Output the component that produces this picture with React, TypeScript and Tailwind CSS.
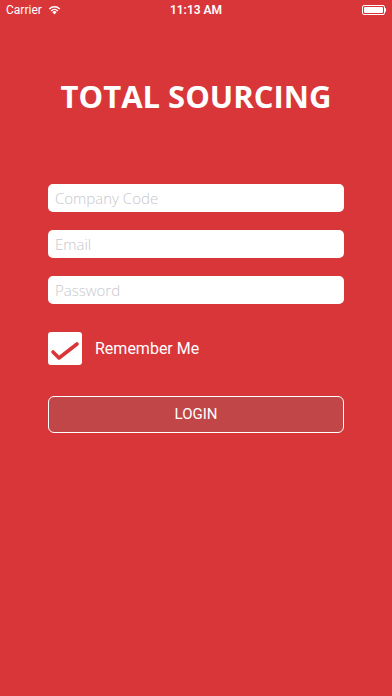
const fields = ["Company Code", "Email", "Password"];

export default function App() {
  return (
    <div className="w-[392px] h-[696px] bg-[#d9363a] flex flex-col font-['Open_Sans',sans-serif] overflow-hidden">
      {/* status bar */}
      <div className="h-5 flex items-center justify-between px-[6px] text-white text-[12px] font-['Roboto','Liberation_Sans',sans-serif]">
        <div className="flex items-center gap-1 w-[120px]">
          <span>Carrier</span>
          <svg width="13" height="10" viewBox="0 0 13 10" className="ml-[2px]">
            <path d="M6.5 9.5 L4.3 7 A3.2 3.2 0 0 1 8.7 7 Z" fill="white" />
            <path d="M2.7 5.4 A5.4 5.4 0 0 1 10.3 5.4 L9.3 6.4 A4 4 0 0 0 3.7 6.4 Z" fill="white" />
            <path d="M0.8 3.5 A8 8 0 0 1 12.2 3.5 L11.2 4.5 A6.6 6.6 0 0 0 1.8 4.5 Z" fill="white" />
          </svg>
        </div>
        <span className="font-semibold">11:13 AM</span>
        <div className="w-[120px] flex justify-end items-center">
          <div className="w-[23px] h-[10px] border border-white rounded-[2px] p-[1px]">
            <div className="w-full h-full bg-white rounded-[1px]" />
          </div>
          <div className="w-[1.5px] h-[4px] bg-white rounded-r-sm" />
        </div>
      </div>

      <h1 className="mt-[56px] text-center text-white font-bold text-[31px] leading-[40px]">
        TOTAL SOURCING
      </h1>

      <div className="mt-[68px] mx-12 flex flex-col gap-[18px]">
        {fields.map(f => (
          <input
            key={f}
            placeholder={f}
            type={f === "Password" ? "password" : "text"}
            className="h-[28px] w-full bg-white rounded-[5px] px-[7px] text-[15px] font-light text-gray-800 placeholder:text-[#c7c7cd] outline-none font-['Open_Sans',sans-serif]"
          />
        ))}
      </div>

      <div className="mt-[28px] mx-12 flex items-center gap-[13px]">
        <div className="w-[34px] h-[33px] bg-white rounded-[3px] flex items-center justify-center">
          <svg width="34" height="33" viewBox="0 0 34 33">
            <path d="M5 20 L11 26 L29 12" stroke="#d9363a" strokeWidth="3.6" fill="none" strokeLinecap="round" strokeLinejoin="round" />
          </svg>
        </div>
        <span className="text-white text-[16px] font-['Roboto','Liberation_Sans',sans-serif]">Remember Me</span>
      </div>

      <button className="mt-[31px] mx-12 h-[37px] border border-white rounded-[6px] bg-[#c04648] text-white text-[15px] font-['Roboto','Liberation_Sans',sans-serif]">
        LOGIN
      </button>
    </div>
  );
}
